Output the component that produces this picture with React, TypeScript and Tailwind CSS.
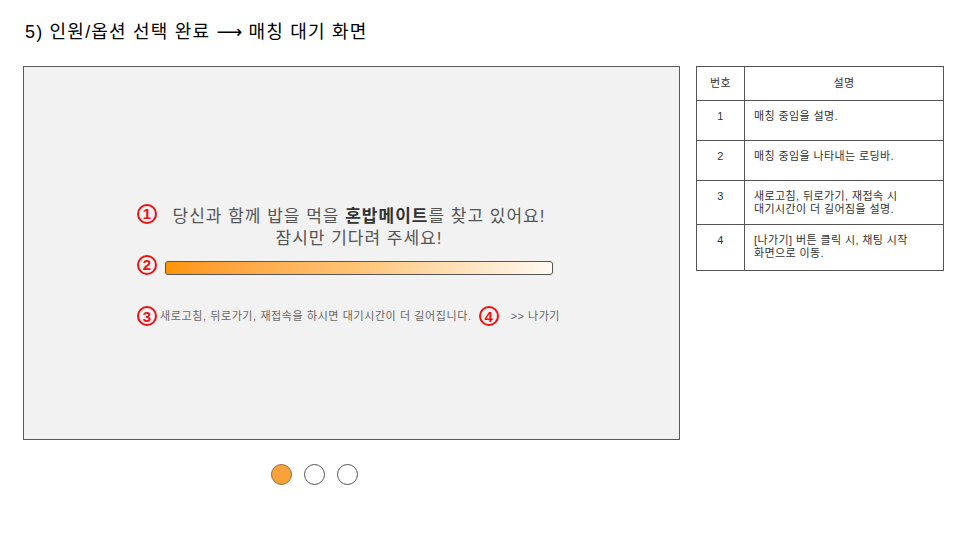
import React from 'react';

const rows = [
    { no: '1', desc: ['매칭 중임을 설명.'], h: 'h-[40px]' },
    { no: '2', desc: ['매칭 중임을 나타내는 로딩바.'], h: 'h-[40px]' },
    { no: '3', desc: ['새로고침, 뒤로가기, 재접속 시', '대기시간이 더 길어짐을 설명.'], h: 'h-[44px]' },
    { no: '4', desc: ['[나가기] 버튼 클릭 시, 채팅 시작', '화면으로 이동.'], h: 'h-[46px]' },
];

const Marker: React.FC<{ n: string }> = ({ n }) => (
    <span className="inline-flex w-[20px] h-[20px] items-center justify-center rounded-full border-2 border-[#f01010] text-[15px] leading-none font-bold text-[#f01010] tracking-normal">
        {n}
    </span>
);

const App: React.FC = () => {
    return (
        <div
            className="w-[960px] h-[540px] bg-white text-black overflow-hidden"
            style={{ fontFamily: '"Liberation Sans", "Noto Sans CJK KR", sans-serif' }}
        >
            <h1 className="pt-[21px] pl-[25px] text-[18px] leading-[22px] font-normal tracking-[1.2px]">
                5) 인원/옵션 선택 완료 <span className="font-['DejaVu_Sans'] tracking-normal">⟶</span> 매칭 대기 화면
            </h1>

            <div className="flex items-start gap-[16px] mt-[23px] ml-[23px]">
                <div>
                    {/* Screen mockup */}
                    <div className="w-[657px] h-[374px] bg-[#f2f2f2] border border-[#5a5a5a] pt-[139px] pl-[113px]">
                        <div className="flex items-start">
                            <div className="w-[28px] -mt-[4px]">
                                <Marker n="1" />
                            </div>
                            <div className="w-[388px] text-center text-[17px] leading-[22px] text-[#555] tracking-[1px]">
                                <p>
                                    당신과 함께 밥을 먹을 <b className="font-bold text-[#333]">혼밥메이트</b>를 찾고 있어요!
                                </p>
                                <p>잠시만 기다려 주세요!</p>
                            </div>
                        </div>

                        <div className="flex items-center mt-[8px]">
                            <div className="w-[28px] -mt-[5px]">
                                <Marker n="2" />
                            </div>
                            <div className="w-[388px] h-[14px] rounded-[3px] border border-[#555] bg-gradient-to-r from-[#ff9500] via-[#ffc577] to-[#fffaf3]" />
                        </div>

                        <div className="flex items-center mt-[29px] text-[11px] text-[#666]">
                            <div className="w-[23px]">
                                <Marker n="3" />
                            </div>
                            <span className="tracking-[0.6px]">새로고침, 뒤로가기, 재접속을 하시면 대기시간이 더 길어집니다.</span>
                            <span className="ml-[7px]">
                                <Marker n="4" />
                            </span>
                            <span className="ml-[12px] tracking-[0.5px]">&gt;&gt; 나가기</span>
                        </div>
                    </div>

                    {/* Pager dots */}
                    <div className="flex gap-[12px] ml-[248px] mt-[24px]">
                        <span className="w-[21px] h-[21px] rounded-full bg-[#f9a23b] border border-[#9c6a2c]" />
                        <span className="w-[21px] h-[21px] rounded-full bg-white border border-[#555]" />
                        <span className="w-[21px] h-[21px] rounded-full bg-white border border-[#555]" />
                    </div>
                </div>

                {/* Description table */}
                <table className="w-[248px] border-collapse text-[11px] leading-[13px] text-[#333] tracking-[0.4px]">
                    <thead>
                        <tr className="h-[34px]">
                            <th className="w-[48px] border border-[#555] font-normal">번호</th>
                            <th className="border border-[#555] font-normal">설명</th>
                        </tr>
                    </thead>
                    <tbody>
                        {rows.map((r) => (
                            <tr key={r.no} className={r.h}>
                                <td className="border border-[#555] text-center align-top pt-[9px]">{r.no}</td>
                                <td className="border border-[#555] align-top pt-[9px] pl-[9px]">
                                    {r.desc.map((d) => (
                                        <div key={d}>{d}</div>
                                    ))}
                                </td>
                            </tr>
                        ))}
                    </tbody>
                </table>
            </div>
        </div>
    );
};

export default App;
